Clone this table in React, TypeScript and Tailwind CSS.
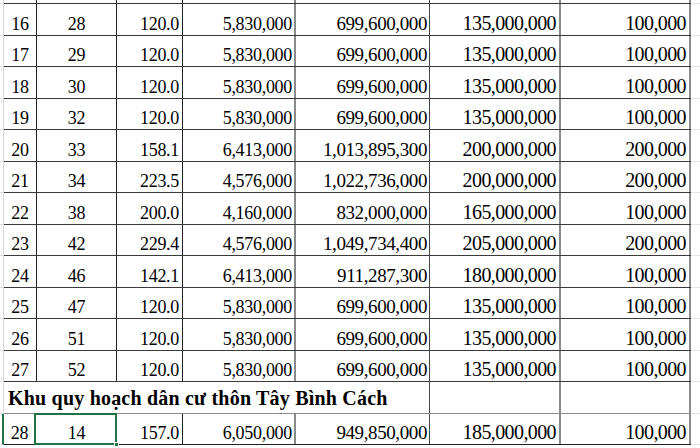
const rows: string[][] = [
  ["16", "28", "120.0", "5,830,000", "699,600,000", "135,000,000", "100,000"],
  ["17", "29", "120.0", "5,830,000", "699,600,000", "135,000,000", "100,000"],
  ["18", "30", "120.0", "5,830,000", "699,600,000", "135,000,000", "100,000"],
  ["19", "32", "120.0", "5,830,000", "699,600,000", "135,000,000", "100,000"],
  ["20", "33", "158.1", "6,413,000", "1,013,895,300", "200,000,000", "200,000"],
  ["21", "34", "223.5", "4,576,000", "1,022,736,000", "200,000,000", "200,000"],
  ["22", "38", "200.0", "4,160,000", "832,000,000", "165,000,000", "100,000"],
  ["23", "42", "229.4", "4,576,000", "1,049,734,400", "205,000,000", "200,000"],
  ["24", "46", "142.1", "6,413,000", "911,287,300", "180,000,000", "100,000"],
  ["25", "47", "120.0", "5,830,000", "699,600,000", "135,000,000", "100,000"],
  ["26", "51", "120.0", "5,830,000", "699,600,000", "135,000,000", "100,000"],
  ["27", "52", "120.0", "5,830,000", "699,600,000", "135,000,000", "100,000"],
];

const lastRow = ["28", "14", "157.0", "6,050,000", "949,850,000", "185,000,000", "100,000"];

const font = "font-['Liberation_Serif','Times_New_Roman',serif] text-black";

// column shells: width + right border
const c1 = "w-[33px] border-r border-[#222] justify-center";
const c2 = "w-[80px] border-r border-[#222] justify-center";
const c3 = "w-[66px] border-r border-[#222] justify-end pr-[3px]";
const c4 = "w-[113px] border-r-2 border-[#8a8a8a] justify-end pr-[2px]";
const c5 = "w-[134px] border-r border-[#444] justify-end pr-[2px]";
const c6 = "w-[131px] border-r-2 border-[#8a8a8a] justify-end pr-[3px]";
const c7 = "w-[130px] border-r-2 border-[#8a8a8a] justify-end pr-[3px]";

// text sizes per column
const t14 = "text-[18px] leading-none tracking-[-0.3px]";
const t5 = "text-[19px] leading-none tracking-[-0.4px]";
const t67 = "text-[20px] leading-none tracking-[-0.6px]";

function Row({ cells, tall }: { cells: string[]; tall: boolean }) {
  const h = tall ? "h-[32px]" : "h-[31px]";
  const cell = "flex items-end pb-[2px] shrink-0";
  return (
    <div className={`flex ${h}`}>
      <div className="w-[4px] shrink-0 border-r border-b border-[#d9d9d9]" />
      <div className={`flex border-b border-[#3a3a3a] ${font}`}>
        <div className={`${cell} ${c1} ${t14}`}>{cells[0]}</div>
        <div className={`${cell} ${c2} ${t14}`}>{cells[1]}</div>
        <div className={`${cell} ${c3} ${t14}`}>{cells[2]}</div>
        <div className={`${cell} ${c4} ${t14}`}>{cells[3]}</div>
        <div className={`${cell} ${c5} ${t5}`}>{cells[4]}</div>
        <div className={`${cell} ${c6} ${t67}`}>{cells[5]}</div>
        <div className={`${cell} ${c7} ${t67}`}>{cells[6]}</div>
      </div>
      <div className="flex-1 border-b border-[#e3e3e3]" />
    </div>
  );
}

export default function App() {
  return (
    <div className="w-[700px] h-[448px] overflow-hidden bg-white">
      {/* cut-off row above */}
      <div className="flex h-[4px]">
        <div className="w-[4px] shrink-0 border-r border-b border-[#d9d9d9]" />
        <div className="flex border-b border-[#3a3a3a]">
          <div className={`${c1} shrink-0`} />
          <div className={`${c2} shrink-0`} />
          <div className={`${c3} shrink-0`} />
          <div className={`${c4} shrink-0`} />
          <div className={`${c5} shrink-0`} />
          <div className={`${c6} shrink-0`} />
          <div className={`${c7} shrink-0`} />
        </div>
        <div className="flex-1 border-b border-[#e3e3e3]" />
      </div>

      {rows.map((r, i) => (
        <Row key={r[0]} cells={r} tall={i % 2 === 0} />
      ))}

      {/* section heading */}
      <div className="flex h-[32px]">
        <div className="w-[4px] shrink-0 border-r border-b border-[#d9d9d9]" />
        <div className={`flex border-b border-[#8a8a8a] ${font}`}>
          <div className="w-[426px] shrink-0 flex items-center pl-[4px] pt-[1px] border-r border-[#444] text-[20px] font-bold leading-none tracking-[0.2px] whitespace-nowrap">
            Khu quy hoạch dân cư thôn Tây Bình Cách
          </div>
          <div className={`${c6} shrink-0`} />
          <div className={`${c7} shrink-0`} />
        </div>
        <div className="flex-1 border-b border-[#e3e3e3]" />
      </div>

      {/* selected row */}
      <div className="flex h-[31px]">
        <div className="w-[4px] shrink-0 border-r-2 border-b border-r-[#217346] border-b-[#d9d9d9]" />
        <div className={`flex border-b border-[#222] ${font}`}>
          <div className={`flex items-end pb-[2px] shrink-0 w-[32px] border-r border-[#222] justify-center ${t14}`}>
            {lastRow[0]}
          </div>
          <div className={`relative flex items-end pb-[2px] shrink-0 w-[81px] justify-center ${t14}`}>
            <div className="absolute -left-[2px] -top-[1px] w-[83px] h-[32px] border-2 border-[#217346]" />
            <div className="absolute -right-[2px] -bottom-[3px] w-[5px] h-[5px] bg-[#217346] border border-white" />
            {lastRow[1]}
          </div>
          <div className={`flex items-end pb-[2px] shrink-0 ${c3} ${t14}`}>{lastRow[2]}</div>
          <div className={`flex items-end pb-[2px] shrink-0 ${c4} ${t14}`}>{lastRow[3]}</div>
          <div className={`flex items-end pb-[2px] shrink-0 ${c5} ${t5}`}>{lastRow[4]}</div>
          <div className={`flex items-end pb-[2px] shrink-0 ${c6} ${t67}`}>{lastRow[5]}</div>
          <div className={`flex items-end pb-[2px] shrink-0 ${c7} ${t67}`}>{lastRow[6]}</div>
        </div>
        <div className="flex-1 border-b border-[#e3e3e3]" />
      </div>
    </div>
  );
}
